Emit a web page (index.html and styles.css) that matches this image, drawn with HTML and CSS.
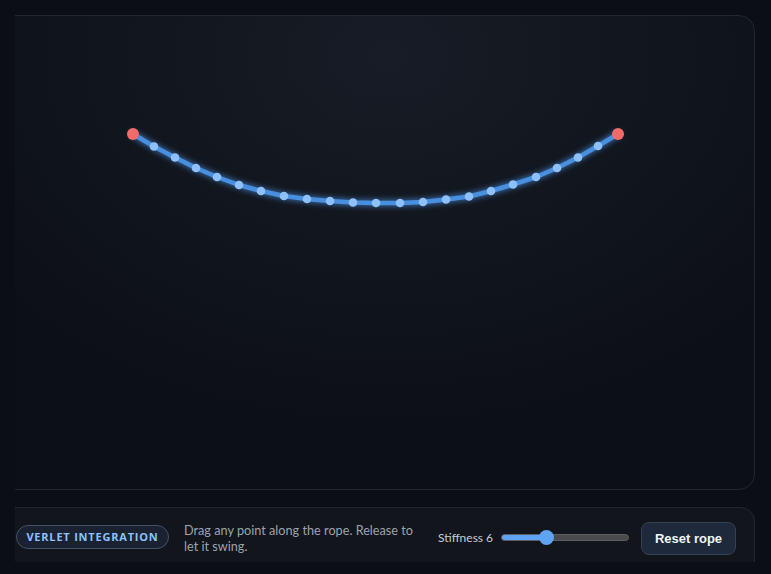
FILE: index.html
```html
<!DOCTYPE html>
<html lang="en">
<head>
    <meta charset="UTF-8">
    <meta name="viewport" content="width=device-width, initial-scale=1.0">
    <title>Rope Simulation</title>
    <link rel="stylesheet" href="styles.css">
</head>
<body>
    <div class="frame">
        <div class="stage">
            <div class="canvas-panel">
                <svg class="rope" viewBox="-2 15 764 474" width="764" height="474">
                    <defs>
                        <filter id="glow" x="-20%" y="-50%" width="140%" height="200%">
                            <feGaussianBlur stdDeviation="3" result="blur"/>
                            <feMerge>
                                <feMergeNode in="blur"/>
                                <feMergeNode in="SourceGraphic"/>
                            </feMerge>
                        </filter>
                    </defs>
                    <polyline class="rope-line" filter="url(#glow)" points="133,134 154,146.5 175,157.5 196,168 217,177 239,185 261,191 284,196 307,199 330,201 353,202.5 376,203 400,203 423,202 446,199.5 469,196.5 491,191 513,184.5 536,177 557,168 578,157.5 598,146 618,134"/>
                    <g class="rope-nodes">
                        <circle cx="154" cy="146.5" r="4.3"/>
                        <circle cx="175" cy="157.5" r="4.3"/>
                        <circle cx="196" cy="168" r="4.3"/>
                        <circle cx="217" cy="177" r="4.3"/>
                        <circle cx="239" cy="185" r="4.3"/>
                        <circle cx="261" cy="191" r="4.3"/>
                        <circle cx="284" cy="196" r="4.3"/>
                        <circle cx="307" cy="199" r="4.3"/>
                        <circle cx="330" cy="201" r="4.3"/>
                        <circle cx="353" cy="202.5" r="4.3"/>
                        <circle cx="376" cy="203" r="4.3"/>
                        <circle cx="400" cy="203" r="4.3"/>
                        <circle cx="423" cy="202" r="4.3"/>
                        <circle cx="446" cy="199.5" r="4.3"/>
                        <circle cx="469" cy="196.5" r="4.3"/>
                        <circle cx="491" cy="191" r="4.3"/>
                        <circle cx="513" cy="184.5" r="4.3"/>
                        <circle cx="536" cy="177" r="4.3"/>
                        <circle cx="557" cy="168" r="4.3"/>
                        <circle cx="578" cy="157.5" r="4.3"/>
                        <circle cx="598" cy="146" r="4.3"/>
                    </g>
                    <circle class="anchor" cx="133" cy="134" r="6"/>
                    <circle class="anchor" cx="618" cy="134" r="6"/>
                </svg>
            </div>

            <div class="controls">
                <span class="badge">VERLET INTEGRATION</span>
                <p class="hint">Drag any point along the rope. Release to let it swing.</p>
                <label class="stiffness">
                    <span class="stiffness-label">Stiffness 6</span>
                    <span class="slider"><span class="slider-fill"></span><span class="slider-thumb"></span></span>
                </label>
                <button class="reset-btn">Reset rope</button>
            </div>
        </div>
    </div>
</body>
</html>
```

FILE: styles.css
```css
* {
    margin: 0;
    padding: 0;
    box-sizing: border-box;
}

body {
    font-family: 'Lato', 'Liberation Sans', sans-serif;
    background: #0b0e14;
    color: #e2e8f0;
}

.frame {
    margin: 15px 0 0 15px;
    width: 756px;
    height: 547px;
    overflow: hidden;
}

.stage {
    margin-left: -17px;
    width: 757px;
    display: flex;
    flex-direction: column;
    gap: 17px;
}

.canvas-panel {
    height: 475px;
    border: 1px solid #22262e;
    border-radius: 16px;
    overflow: hidden;
    background: radial-gradient(ellipse 520px 380px at 390px 40px, #171c26 0%, #11151d 55%, #0c0f15 100%);
}

.rope {
    display: block;
    margin: -1px;
}

.rope-line {
    fill: none;
    stroke: #4a8fe0;
    stroke-width: 4.5;
    stroke-linejoin: round;
    stroke-linecap: round;
}

.rope-nodes circle {
    fill: #8ec0fb;
}

.anchor {
    fill: #f26b6b;
}

.controls {
    height: 70px;
    border: 1px solid #22262e;
    border-radius: 14px;
    background: #12151b;
    display: flex;
    align-items: flex-start;
    padding: 15px 18px 0 17px;
}

.badge {
    flex-shrink: 0;
    width: 153px;
    margin-top: 2px;
    height: 24px;
    border: 1px solid #465269;
    border-radius: 12px;
    background: #1a2130;
    color: #8cc2ff;
    font-family: 'Open Sans', sans-serif;
    font-size: 11px;
    font-weight: 700;
    letter-spacing: 0.8px;
    line-height: 22px;
    text-align: center;
    white-space: nowrap;
}

.hint {
    flex-shrink: 0;
    width: 236px;
    margin-left: 15px;
    margin-top: -1px;
    color: #9aa3b1;
    font-size: 12.7px;
    line-height: 16px;
}

.stiffness {
    flex-shrink: 0;
    display: flex;
    align-items: center;
    gap: 8px;
    margin-left: 18px;
    margin-top: 7px;
    color: #c5ccd6;
    font-size: 12px;
    white-space: nowrap;
}

.slider {
    position: relative;
    width: 128px;
    height: 7px;
    border: 1px solid #5e5e5e;
    border-radius: 4px;
    background: #4a4a4a;
}

.slider-fill {
    display: block;
    width: 45px;
    height: 100%;
    border-radius: 4px 0 0 4px;
    background: #5fa3f5;
}

.slider-thumb {
    position: absolute;
    left: 37px;
    top: -5px;
    width: 15px;
    height: 15px;
    border-radius: 50%;
    background: #5fa3f5;
}

.reset-btn {
    flex-shrink: 0;
    width: 95px;
    margin-left: auto;
    margin-top: -1px;
    height: 33px;
    border: 1px solid #334155;
    border-radius: 8px;
    background: #1e293b;
    color: #f1f5f9;
    font-family: 'Liberation Sans', sans-serif;
    font-size: 13px;
    font-weight: 700;
    white-space: nowrap;
    cursor: pointer;
}
```
